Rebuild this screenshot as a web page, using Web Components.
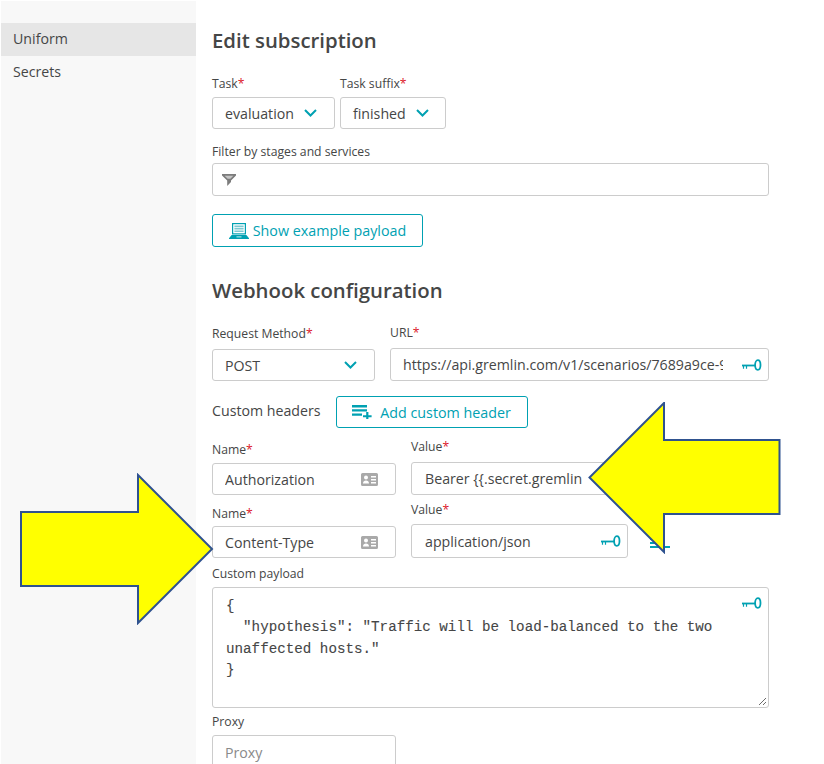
<!DOCTYPE html>
<html><head><meta charset="utf-8"><title>Edit subscription</title>
<style>
html,body{margin:0;padding:0;height:764px;overflow:hidden;background:#fff}
body{font-family:"Open Sans",sans-serif;color:#454646;font-size:14.2px}
</style></head>
<body>
<x-app>
  <x-sidebar slot="side">
    <x-nav active>Uniform</x-nav>
    <x-nav>Secrets</x-nav>
  </x-sidebar>
  <x-heading>Edit subscription</x-heading>
  <x-row style="margin-top:22px;gap:5px">
    <x-field label="Task" req gap="5"><x-select>evaluation</x-select></x-field>
    <x-field label="Task suffix" req gap="5"><x-select style="width:106px">finished</x-select></x-field>
  </x-row>
  <x-field style="margin-top:15px" label="Filter by stages and services" gap="3"><x-input icon="filter" h="33"></x-input></x-field>
  <x-button style="margin-top:18px;width:211px;height:33px" icon="laptop">Show example payload</x-button>
  <x-heading style="margin-top:29px">Webhook configuration</x-heading>
  <x-row style="margin-top:21px;gap:15px;align-items:flex-end">
    <x-field style="width:163px" label="Request Method" req gap="7"><x-select wide>POST</x-select></x-field>
    <x-field style="flex:1;min-width:0" label="URL" req gap="7"><x-input h="33" trail="key">https://api.gremlin.com/v1/scenarios/7689a9ce-9c1f-4ed2-a8f7</x-input></x-field>
  </x-row>
  <x-row style="margin-top:15px;gap:15px;align-items:center">
    <x-text style="margin-top:-2px">Custom headers</x-text>
    <x-button style="width:192px" icon="addlist">Add custom header</x-button>
  </x-row>
  <x-row style="margin-top:11px;gap:15px;align-items:flex-end">
    <x-field style="width:184px" label="Name" req gap="5"><x-input h="32" trail="card">Authorization</x-input></x-field>
    <x-field style="width:217px" label="Value" req gap="7"><x-input style="padding-left:13px" h="33" trail="key">Bearer {{.secret.gremlin</x-input></x-field>
    <x-remove></x-remove>
  </x-row>
  <x-row style="margin-top:7px;gap:15px;align-items:flex-end">
    <x-field style="width:184px" label="Name" req gap="4"><x-input h="32" trail="card">Content-Type</x-input></x-field>
    <x-field style="width:217px" label="Value" req gap="6"><x-input style="padding-left:13px" h="34" trail="key">application/json</x-input></x-field>
    <x-remove></x-remove>
  </x-row>
  <x-field style="margin-top:8px" label="Custom payload" gap="5">
    <x-payload>{
  "hypothesis": "Traffic will be load-balanced to the two unaffected hosts."
}</x-payload>
  </x-field>
  <x-field style="margin-top:6px;width:184px" label="Proxy" gap="5"><x-input h="34" ph>Proxy</x-input></x-field>
  <x-arrow slot="over" dir="right" style="left:20px;top:473px"></x-arrow>
  <x-arrow slot="over" dir="left" style="left:588px;top:402px"></x-arrow>
</x-app>

<script>
const ICONS={
 chevron:'<svg width="13" height="8" viewBox="0 0 13 8" fill="none" stroke="#00a1b2" stroke-width="2"><path d="M1 1l5.500 5.500L12 1"/></svg>',
 filter:'<svg width="14" height="12" viewBox="0 0 14 12"><path fill="#7c7c7c" d="M0 0h14v1.600L9 6.400V8L5.200 12V6.400L0 1.600z"/><path fill="#fff" d="M2.600 1.700h8.800L8.400 4.700H5.600z" opacity=".55"/></svg>',
 laptop:'<svg width="20" height="16" viewBox="0 0 20 16"><path fill="#00a1b2" d="M3 0h14v11.500H3z"/><path fill="#fff" d="M4.200 1.200h11.600v9.100H4.200z"/><path fill="#7cc9d2" d="M5.400 2.600h9.200v1.600H5.400zM5.400 5h9.200v1.600H5.400zM5.400 7.400h9.200V9H5.400z"/><path fill="#00a1b2" d="M2.600 12h14.800L20 15.200V16H0v-.8z"/><path fill="#7cd0d9" d="M7.500 13h5v1.600h-5z"/></svg>',
 addlist:'<svg width="20" height="14" viewBox="0 0 20 14" fill="#00a1b2"><path d="M0 0h15v2.400H0zM0 4.200h15v2.400H0zM0 8.400h10v2.400H0zM14.200 7h2.200v3.200h3.200v2.100h-3.200V14h-2.200v-1.700H11v-2.100h3.200z" /></svg>',
 key:'<svg width="20" height="12" viewBox="0 0 20 12" fill="none" stroke="#00a1b2"><ellipse cx="15.800" cy="6" rx="2.700" ry="4.800" stroke-width="1.800"/><path stroke-width="1.800" d="M0 6.500h13.400"/><path stroke-width="1.200" d="M1.500 7v2.800M4.500 7v2.800"/></svg>',
 card:'<svg width="17" height="13" viewBox="0 0 17 13"><path fill="#a9a9a9" fill-rule="evenodd" d="M1.500 0h14A1.500 1.500 0 0 1 17 1.500v10a1.500 1.500 0 0 1-1.500 1.500h-14A1.500 1.500 0 0 1 0 11.500v-10A1.500 1.500 0 0 1 1.500 0zM5 2.600a2 2 0 1 0 0 4 2 2 0 0 0 0-4zM2 10.600h6c0-2-1.200-3.200-3-3.200s-3 1.200-3 3.200zM10 3v1.400h5V3zM10 6v1.400h5V6zM10 9v1.400h5V9z"/></svg>'
};
function def(name,css,html){
  customElements.define(name,class extends HTMLElement{
    constructor(){super();this.attachShadow({mode:'open'});}
    connectedCallback(){
      this.shadowRoot.innerHTML='<style>'+css+'</style>'+(typeof html==='function'?html(this):html);
    }
  });
}
def('x-app',`:host{display:flex;width:824px;height:764px;overflow:hidden;position:relative;font-family:"Open Sans",sans-serif;color:#454646}
 .side{width:195px;flex:none;background:#f8f8f8;padding:22px 0 0 0;box-sizing:border-box;margin:1px 0 0 1px}
 .main{flex:1;min-width:0;padding:26px 55px 0 16px;display:flex;flex-direction:column;align-items:stretch}
 ::slotted(*){flex:none}`,
 `<div class="side"><slot name="side"></slot></div><div class="main"><slot></slot></div><slot name="over"></slot>`);
def('x-sidebar',`:host{display:block}`,`<slot></slot>`);
def('x-nav',`:host{display:block;height:32.5px;line-height:32px;padding-left:12px;font-size:14.2px;color:#454646}
 :host([active]){background:#e6e6e6}`,`<slot></slot>`);
def('x-heading',`:host{display:block;font-size:20.35px;line-height:28px;font-weight:600;color:#454646;align-self:flex-start}`,`<slot></slot>`);
def('x-row',`:host{display:flex;align-items:flex-start}`,`<slot></slot>`);
def('x-text',`:host{display:block;font-size:14.2px;line-height:20px}`,`<slot></slot>`);
def('x-field',`:host{display:block;min-width:0}
 .l{font-size:12.2px;line-height:16px;color:#454646;display:block}
 .r{color:#dc172a}`,
 el=>`<span class="l" style="margin-bottom:${el.getAttribute('gap')||4}px">${el.getAttribute('label')}${el.hasAttribute('req')?'<span class="r">*</span>':''}</span><slot></slot>`);
def('x-select',`:host{display:flex;align-items:center;gap:10px;height:32px;box-sizing:border-box;border:1px solid #cccccc;border-radius:3px;padding:0 17px 0 12px;font-size:14.2px;color:#454646;background:#fff;width:max-content}
 :host([wide]){width:auto;justify-content:space-between}
 svg{display:block;flex:none}`,
 `<slot></slot>${ICONS.chevron}`);
def('x-input',`:host{display:flex;align-items:center;box-sizing:border-box;border:1px solid #cccccc;border-radius:3px;padding:0 6px 0 12px;font-size:14.2px;color:#454646;background:#fff;gap:19px}
 :host([ph]){color:#8a8a8a}
 .t{flex:1;min-width:0;overflow:hidden;white-space:nowrap}
 svg{display:block;flex:none}
 .lead{margin:0 -10px 0 -3px}`,
 el=>{
  el.style.height=el.getAttribute('h')+'px';
  const ic=el.getAttribute('icon'),tr=el.getAttribute('trail');
  const pad=tr==='card'?'style="margin-right:11px"':'';
  return (ic?`<span class="lead">${ICONS[ic]}</span>`:'')+`<span class="t"><slot></slot></span>`+(tr?`<span ${pad}>${ICONS[tr]}</span>`:'');
 });
def('x-button',`:host{display:flex;align-items:center;justify-content:center;gap:4px;height:32px;box-sizing:border-box;border:1px solid #00a1b2;border-radius:3px;font-size:14.3px;color:#00a1b2;background:#fff}
 svg{display:block}`,
 el=>`${ICONS[el.getAttribute('icon')]}<span style="${el.getAttribute('icon')==='addlist'?'margin-left:4px':''}"><slot></slot></span>`);
def('x-remove',`:host{display:block;width:20px;height:14px;margin:0 0 7px 7px;flex:none}
 svg{display:block}`,
 `<svg width="20" height="14" viewBox="0 0 20 14" fill="#00a1b2"><path d="M0 1h15v2H0zM0 5h15v2H0zM0 9h10v2H0zM11 9h9v2h-9z"/></svg>`);
def('x-payload',`:host{display:block;position:relative;height:121px;box-sizing:border-box;border:1px solid #cccccc;border-radius:3px;padding:8px 40px 0 13px;background:#fff}
 pre{margin:0;font:14.23px/21.3px "Liberation Mono",monospace;color:#454646;-webkit-text-stroke:.1px #454646;white-space:pre-wrap;word-break:normal}
 .k{position:absolute;top:9px;right:6px}
 .g{position:absolute;right:1px;bottom:1px}
 svg{display:block}`,
 `<pre><slot></slot></pre><span class="k">${ICONS.key}</span><span class="g"><svg width="9" height="9" viewBox="0 0 9 9" stroke="#6b6b6b" fill="none"><path d="M1 8l7-7M5 8l3-3"/></svg></span>`);
def('x-arrow',`:host{display:block;position:absolute;line-height:0}
 svg{display:block}`,
 el=>el.getAttribute('dir')==='right'
 ?`<svg width="194" height="152" viewBox="0 0 194 152"><path d="M1 39H118V2L192 76 118 150V113H1z" fill="#ffff00" stroke="#2f528f" stroke-width="2"/></svg>`
 :`<svg width="194" height="152" viewBox="0 0 194 152"><path d="M191.500 38H76V1L1.500 75.500 76 150V112H191.500z" fill="#ffff00" stroke="#2f528f" stroke-width="2"/></svg>`);
</script>
</body></html>
